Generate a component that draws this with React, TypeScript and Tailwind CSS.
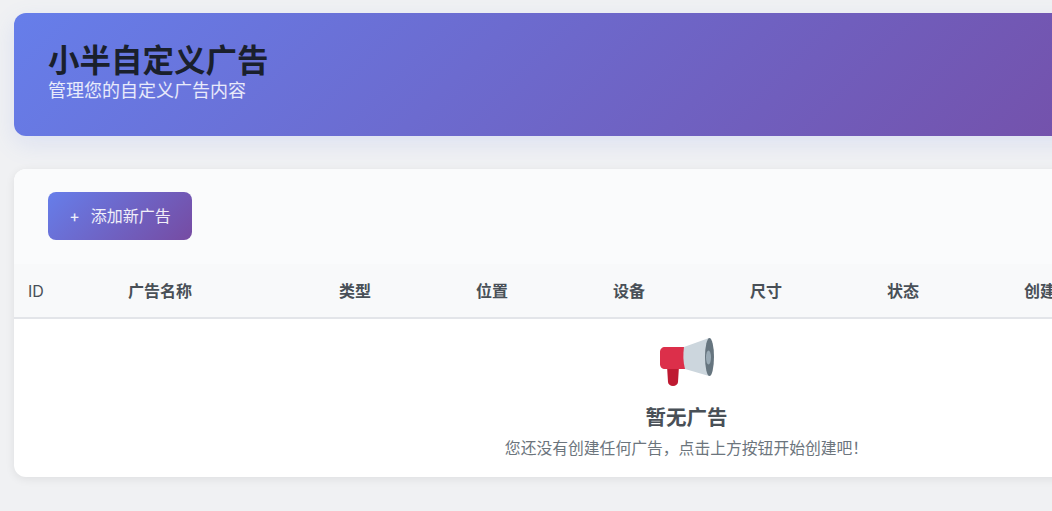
const columns = [
  { label: "ID", width: "w-[100px]", className: "font-normal" },
  { label: "广告名称", width: "w-[211px]", className: "font-bold" },
  { label: "类型", width: "w-[137px]", className: "font-bold" },
  { label: "位置", width: "w-[137px]", className: "font-bold" },
  { label: "设备", width: "w-[137px]", className: "font-bold" },
  { label: "尺寸", width: "w-[137px]", className: "font-bold" },
  { label: "状态", width: "w-[137px]", className: "font-bold" },
  { label: "创建时间", width: "w-[137px]", className: "font-bold" },
  { label: "操作", width: "w-[212px]", className: "font-bold" },
];

function Megaphone() {
  return (
    <svg width="54" height="48" viewBox="0 0 54 48" aria-hidden="true">
      <path d="M7 28h12l-1 16a5 4 0 0 1-10 0z" fill="#be1931" />
      <path d="M0 14c0-3 2-5 5-5h21v22H5c-3 0-5-2-5-5z" fill="#dc2f4a" />
      <path d="M24 9 49 0v38L25 31c-2-7-2-15-1-22z" fill="#ccd6dd" />
      <ellipse cx="49.5" cy="19" rx="4.5" ry="19" fill="#66757f" />
      <ellipse cx="48.5" cy="19.5" rx="2.5" ry="7" fill="#99aab5" />
    </svg>
  );
}

export default function App() {
  return (
    <div className="h-[511px] w-full overflow-hidden bg-[#f0f1f3] px-[14px] pt-[13px] font-['Inter','Noto_Sans_CJK_SC',sans-serif]">
      <div className="w-[1345px]">
        <header className="flex h-[123px] flex-col justify-center rounded-xl bg-[linear-gradient(135deg,#667eea_0%,#764ba2_92%)] px-[34px] pb-[4px] shadow-[0_8px_24px_rgba(102,126,234,0.14)]">
          <h1 className="text-[31.5px] leading-[36px] font-bold text-[#1a202c]">小半自定义广告</h1>
          <p className="text-[18px] leading-[24px] text-white/85">管理您的自定义广告内容</p>
        </header>

        <section className="mt-[33px] h-[308px] overflow-hidden rounded-xl bg-white shadow-[0_2px_10px_rgba(0,0,0,0.08)]">
          <div className="h-[95px] bg-[#fafbfc] px-[34px] pt-[23px]">
            <button className="flex h-12 w-36 items-center justify-center gap-[11px] rounded-lg bg-[linear-gradient(135deg,#667eea,#764ba2)] text-[16px] font-normal text-white/90">
              <span>+</span>
              <span>添加新广告</span>
            </button>
          </div>

          <table className="w-full table-fixed border-collapse">
            <thead>
              <tr className="h-[54px] border-b-2 border-[#e3e5e9] bg-[#f8f9fa] text-left text-[16px] text-[#495057]">
                {columns.map((col) => (
                  <th key={col.label} className={`${col.width} ${col.className} px-[14px]`}>
                    {col.label}
                  </th>
                ))}
              </tr>
            </thead>
            <tbody>
              <tr>
                <td colSpan={columns.length} className="pt-[19px] text-center">
                  <div className="flex flex-col items-center">
                    <Megaphone />
                    <h3 className="mt-[18px] text-[20.5px] leading-[28px] font-bold text-[#495057]">暂无广告</h3>
                    <p className="mt-[6px] text-[15.8px] leading-[22px] text-[#6c757d]">
                      您还没有创建任何广告，点击上方按钮开始创建吧！
                    </p>
                  </div>
                </td>
              </tr>
            </tbody>
          </table>
        </section>
      </div>
    </div>
  );
}
